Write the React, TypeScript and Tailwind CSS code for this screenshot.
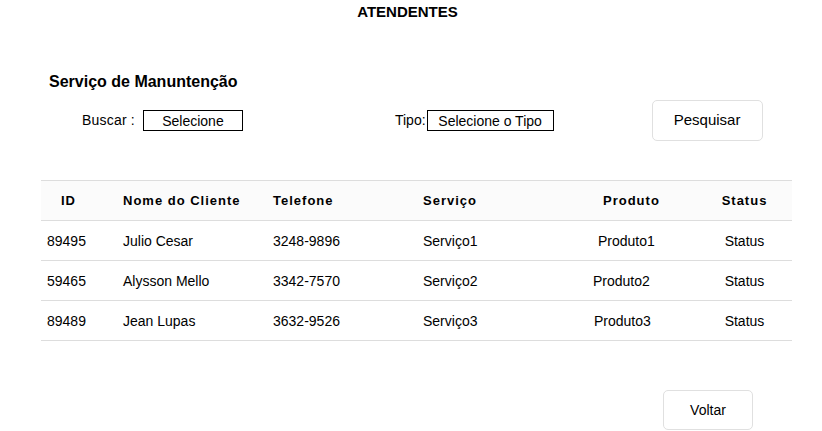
const rows = [
  { id: "89495", nome: "Julio Cesar", tel: "3248-9896", servico: "Serviço1", produto: "Produto1", pl: "pl-[31px]" },
  { id: "59465", nome: "Alysson Mello", tel: "3342-7570", servico: "Serviço2", produto: "Produto2", pl: "pl-[26px]" },
  { id: "89489", nome: "Jean Lupas", tel: "3632-9526", servico: "Serviço3", produto: "Produto3", pl: "pl-[27px]" },
];

const cols = "grid grid-cols-[76px_150px_150px_150px_130px_95px] items-center";

export default function App() {
  return (
    <div className="w-[822px] h-[431px] bg-white text-black font-['Liberation_Sans',Arial,sans-serif] overflow-hidden">
      {/* Title */}
      <h1 className="pt-[3px] pr-[7px] text-center text-[15px] font-bold leading-[17px]">ATENDENTES</h1>

      {/* Section */}
      <h2 className="mt-[53px] ml-[49px] text-[16px] font-bold leading-[18px]">Serviço de Manuntenção</h2>

      {/* Filters */}
      <div className="mt-[9px] ml-[82px] flex items-center h-[41px] text-[14px]">
        <span className="tracking-[0.2px]">Buscar :</span>
        <div className="ml-[8px] w-[100px] h-[21px] border border-black flex items-center justify-center leading-none">
          Selecione
        </div>
        <span className="ml-[152px]">Tipo:</span>
        <div className="ml-[1px] w-[127px] h-[21px] border border-black flex items-center justify-center leading-none">
          Selecione o Tipo
        </div>
        <button className="ml-[98px] w-[111px] h-[41px] rounded-[5px] border border-[#e0e0e0] bg-white text-[15px]">
          Pesquisar
        </button>
      </div>

      {/* Table */}
      <div className="mt-[39px] ml-[41px] w-[751px] text-[14px]">
        <div className={`${cols} h-[41px] bg-[#fbfbfb] border-y border-[#dddddd] text-[13px] font-bold tracking-[1px]`}>
          <div className="pl-[20px]">ID</div>
          <div className="pl-[6px]">Nome do Cliente</div>
          <div className="pl-[6px]">Telefone</div>
          <div className="pl-[6px]">Serviço</div>
          <div className="pl-[36px]">Produto</div>
          <div className="text-center">Status</div>
        </div>
        {rows.map((r) => (
          <div key={r.id} className={`${cols} h-[40px] border-b border-[#dddddd] pt-[1px]`}>
            <div className="pl-[6px]">{r.id}</div>
            <div className="pl-[6px]">{r.nome}</div>
            <div className="pl-[6px]">{r.tel}</div>
            <div className="pl-[6px]">{r.servico}</div>
            <div className={r.pl}>{r.produto}</div>
            <div className="text-center">Status</div>
          </div>
        ))}
      </div>

      {/* Footer */}
      <div className="mt-[49px] flex justify-end pr-[69px]">
        <button className="w-[90px] h-[40px] rounded-[5px] border border-[#e0e0e0] bg-white text-[14px]">
          Voltar
        </button>
      </div>
    </div>
  );
}
